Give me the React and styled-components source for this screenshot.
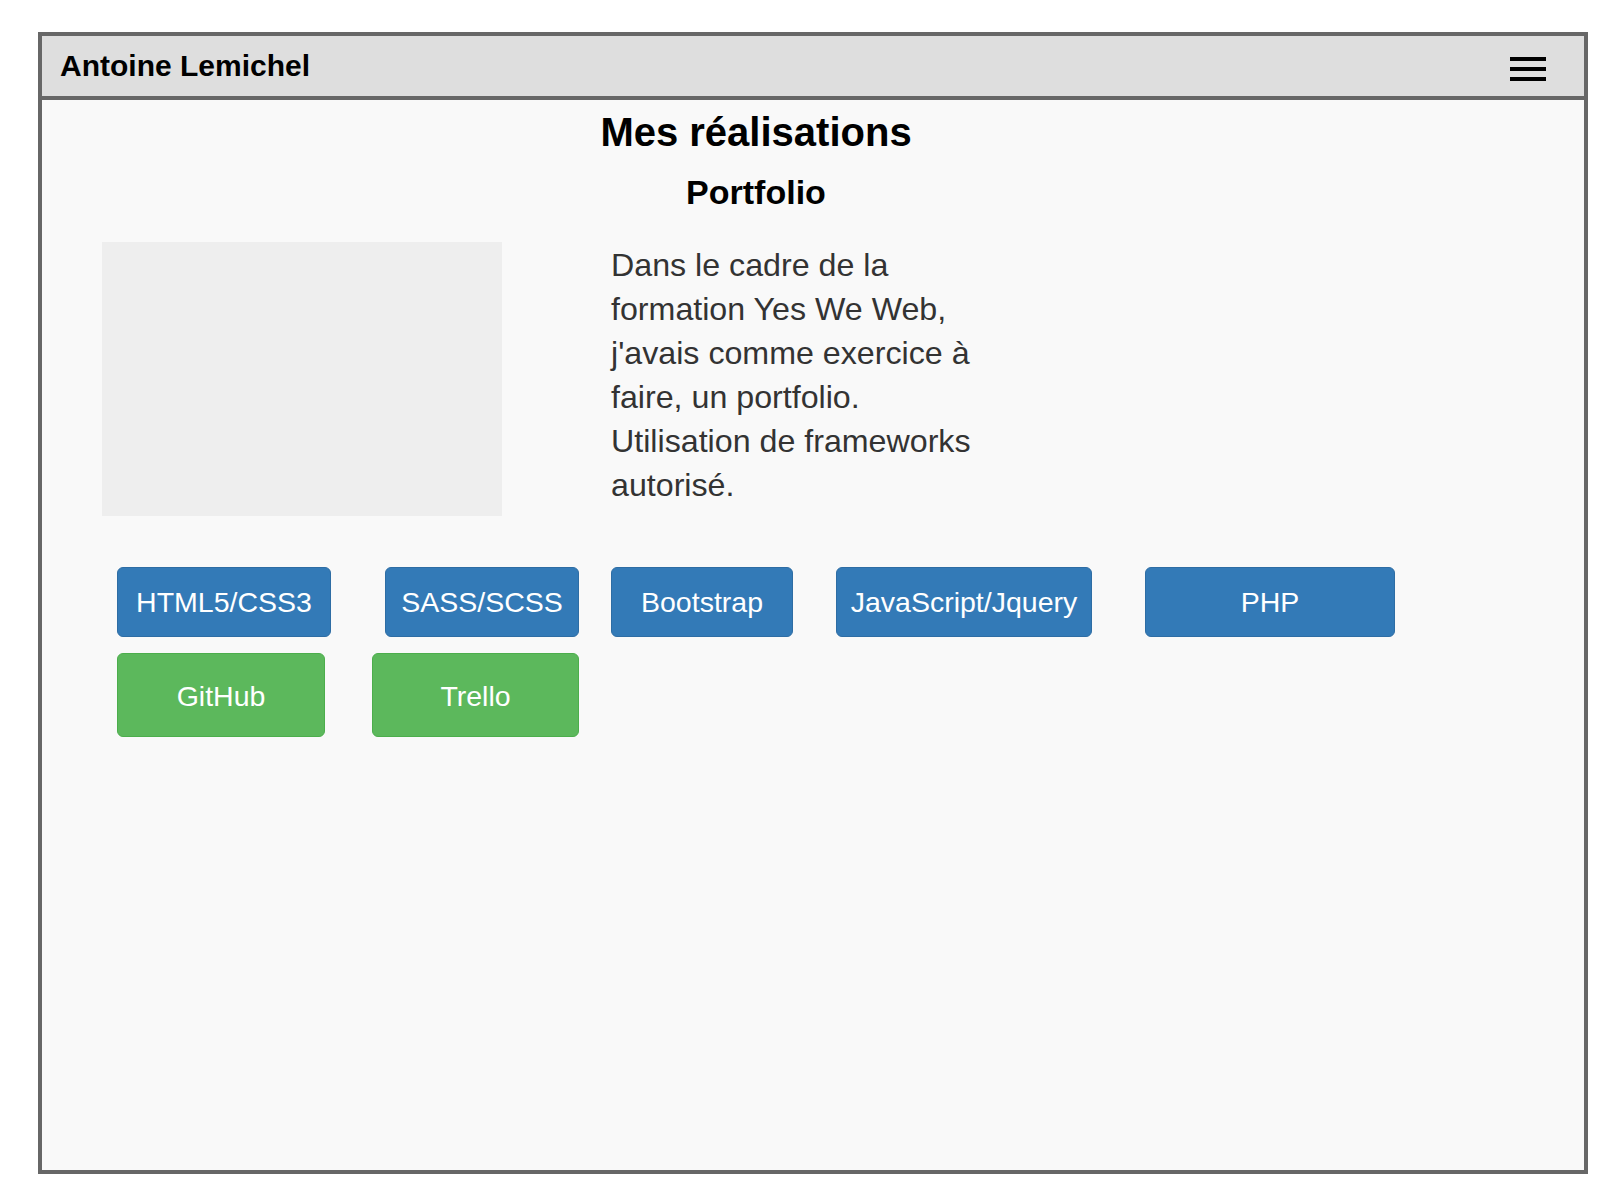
import React from "react";
import styled, { createGlobalStyle } from "styled-components";

const GlobalStyle = createGlobalStyle`
  html, body {
    margin: 0;
    padding: 0;
    background: #ffffff;
  }
  body {
    font-family: "Liberation Sans", Arial, Helvetica, sans-serif;
  }
  * { box-sizing: border-box; }
`;

const Frame = styled.div`
  margin: 32px 0 0 38px;
  width: 1550px;
  height: 1142px;
  border: 4px solid #676767;
  background: #f9f9f9;
  display: flex;
  flex-direction: column;
`;

const Header = styled.header`
  height: 64px;
  flex: none;
  background: #dedede;
  border-bottom: 4px solid #676767;
  display: flex;
  align-items: center;
  justify-content: space-between;
  padding: 0 38px 0 18px;
`;

const Brand = styled.div`
  font-size: 30px;
  font-weight: 700;
  color: #000;
  line-height: 1;
`;

const Burger = styled.div`
  width: 36px;
  display: flex;
  flex-direction: column;
  gap: 6px;
  margin-top: 6px;
`;

const Bar = styled.span`
  display: block;
  height: 4px;
  background: #000;
`;

const Main = styled.main`
  flex: 1;
  display: flex;
  flex-direction: column;
`;

const Titles = styled.div`
  width: 1428px;
  text-align: center;
  color: #000;
`;

const Title = styled.h1`
  margin: 10px 0 0;
  font-size: 40px;
  line-height: 44px;
  font-weight: 700;
`;

const Subtitle = styled.h2`
  margin: 19px 0 0;
  font-size: 34px;
  line-height: 38px;
  font-weight: 700;
`;

const Project = styled.section`
  display: flex;
  align-items: flex-start;
  margin-top: 31px;
  padding-left: 60px;
`;

const Thumb = styled.div`
  width: 400px;
  height: 274px;
  background: #eeeeee;
  flex: none;
`;

const Description = styled.p`
  margin: 1px 0 0 109px;
  width: 380px;
  font-size: 32.2px;
  line-height: 44px;
  color: #333;
`;

const ButtonRow = styled.div`
  display: flex;
  padding-left: 75px;
  margin-top: ${(p) => p.$mt}px;
`;

const Tag = styled.div`
  width: ${(p) => p.$w}px;
  height: ${(p) => p.$h}px;
  margin-left: ${(p) => p.$ml || 0}px;
  padding-top: ${(p) => (p.$green ? 2 : 1)}px;
  display: flex;
  align-items: center;
  justify-content: center;
  font-size: 28.5px;
  color: #fff;
  border-radius: 6px;
  background: ${(p) => (p.$green ? "#5cb85c" : "#337ab7")};
  border: 1px solid ${(p) => (p.$green ? "#4cae4c" : "#2e6da4")};
`;

const skills = [
  { label: "HTML5/CSS3", w: 214, ml: 0 },
  { label: "SASS/SCSS", w: 194, ml: 54 },
  { label: "Bootstrap", w: 182, ml: 32 },
  { label: "JavaScript/Jquery", w: 256, ml: 43 },
  { label: "PHP", w: 250, ml: 53 },
];

const tools = [
  { label: "GitHub", w: 208, ml: 0 },
  { label: "Trello", w: 207, ml: 47 },
];

export default function App() {
  return (
    <>
      <GlobalStyle />
      <Frame>
        <Header>
          <Brand>Antoine Lemichel</Brand>
          <Burger>
            <Bar />
            <Bar />
            <Bar />
          </Burger>
        </Header>
        <Main>
          <Titles>
            <Title>Mes réalisations</Title>
            <Subtitle>Portfolio</Subtitle>
          </Titles>
          <Project>
            <Thumb />
            <Description>
              Dans le cadre de la formation Yes We Web, j'avais comme exercice à
              faire, un portfolio. Utilisation de frameworks autorisé.
            </Description>
          </Project>
          <ButtonRow $mt={51}>
            {skills.map((s) => (
              <Tag key={s.label} $w={s.w} $h={70} $ml={s.ml}>
                {s.label}
              </Tag>
            ))}
          </ButtonRow>
          <ButtonRow $mt={16}>
            {tools.map((s) => (
              <Tag key={s.label} $w={s.w} $h={84} $ml={s.ml} $green>
                {s.label}
              </Tag>
            ))}
          </ButtonRow>
        </Main>
      </Frame>
    </>
  );
}
